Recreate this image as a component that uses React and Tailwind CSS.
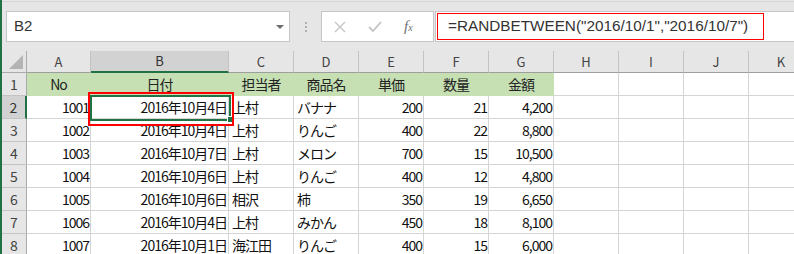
import React from "react";

const cols = [
  { key: "A", w: "w-[64px]" },
  { key: "B", w: "w-[138px]" },
  { key: "C", w: "w-[65px]" },
  { key: "D", w: "w-[65px]" },
  { key: "E", w: "w-[65px]" },
  { key: "F", w: "w-[65px]" },
  { key: "G", w: "w-[65px]" },
  { key: "H", w: "w-[65px]" },
  { key: "I", w: "w-[65px]" },
  { key: "J", w: "w-[65px]" },
  { key: "K", w: "w-[65px]" },
];

const head = ["No", "日付", "担当者", "商品名", "単価", "数量", "金額"];

const rows = [
  ["1001", "2016年10月4日", "上村", "バナナ", "200", "21", "4,200"],
  ["1002", "2016年10月4日", "上村", "りんご", "400", "22", "8,800"],
  ["1003", "2016年10月7日", "上村", "メロン", "700", "15", "10,500"],
  ["1004", "2016年10月6日", "上村", "りんご", "400", "12", "4,800"],
  ["1005", "2016年10月6日", "相沢", "柿", "350", "19", "6,650"],
  ["1006", "2016年10月4日", "上村", "みかん", "450", "18", "8,100"],
  ["1007", "2016年10月1日", "海江田", "りんご", "400", "15", "6,000"],
];

// which columns hold text (left aligned)
const textCols = [2, 3];

const jp = "font-['Noto_Sans_CJK_JP',sans-serif]";

function ColHeader() {
  return (
    <div className="flex h-[22px]">
      <div className="w-[25px] shrink-0 bg-[#e6e6e6] border-r border-b border-[#ababab] relative">
        <div className="absolute right-[3px] bottom-[3px] w-0 h-0 border-l-[14px] border-l-transparent border-b-[14px] border-b-[#b4b4b4]" />
      </div>
      {cols.map((c) =>
        c.key === "B" ? (
          <div key={c.key} className={`${c.w} shrink-0 bg-[#d2d2d2] border-r border-[#c3c3c3] border-b-2 border-b-[#217346] flex items-center justify-center text-[13px] text-[#333] ${jp}`}>
            {c.key}
          </div>
        ) : (
          <div key={c.key} className={`${c.w} shrink-0 bg-[#e6e6e6] border-r border-[#c3c3c3] border-b border-b-[#9e9e9e] flex items-center justify-center text-[13px] text-[#444] ${jp}`}>
            {c.key}
          </div>
        )
      )}
    </div>
  );
}

function RowHead({ n }) {
  const sel = n === 2;
  return (
    <div
      className={`w-[25px] shrink-0 flex items-center justify-center text-[14px] ${jp} ${
        sel
          ? "bg-[#d2d2d2] border-r-2 border-r-[#217346] border-b border-b-[#c3c3c3] text-[#333]"
          : "bg-[#e6e6e6] border-r border-r-[#ababab] border-b border-b-[#c3c3c3] text-[#444]"
      }`}
    >
      {n}
    </div>
  );
}

function Cell({ w, children, align, fill }) {
  return (
    <div
      className={`${w} shrink-0 h-full flex items-center overflow-hidden whitespace-nowrap border-r border-b ${
        fill ? "bg-[#c6e0b4] border-[#c6e0b4]" : "bg-white border-[#d4d4d4]"
      } ${align === "right" ? "justify-end pr-[1px]" : align === "center" ? "justify-center" : "justify-start pl-[3px]"}`}
    >
      {children}
    </div>
  );
}

export default function App() {
  return (
    <div className="w-[794px] h-[254px] overflow-hidden bg-white border-l-2 border-[#217346] relative">
      {/* formula bar */}
      <div className="h-[51px] bg-[#e6e6e6] pt-px">
        <div className="h-[50px] border-t border-[#d6d6d6] flex items-start pt-[9px] pl-[4px]">
          <div className="w-[284px] h-[31px] bg-white border border-[#c6c6c6] flex items-center justify-between pl-[7px] pr-[5px]">
            <span className="font-['Liberation_Sans',sans-serif] text-[15px] text-[#333]">B2</span>
            <div className="w-0 h-0 border-l-[4px] border-r-[4px] border-t-[4px] border-l-transparent border-r-transparent border-t-[#6d6d6d]" />
          </div>
          <div className="w-[31px] h-[31px] flex flex-col items-center justify-center gap-[2px]">
            <span className="w-[2px] h-[2px] bg-[#b0b0b0]" />
            <span className="w-[2px] h-[2px] bg-[#b0b0b0]" />
            <span className="w-[2px] h-[2px] bg-[#b0b0b0]" />
          </div>
          <div className="w-[113px] h-[31px] bg-white border border-[#c6c6c6] flex items-center">
            <svg width="12" height="12" viewBox="0 0 12 12" className="ml-[12px]">
              <path d="M1 1L11 11M11 1L1 11" stroke="#c4c4c4" strokeWidth="1.4" fill="none" />
            </svg>
            <svg width="14" height="11" viewBox="0 0 14 11" className="ml-[22px]">
              <path d="M1 6L5 10L13 1" stroke="#c4c4c4" strokeWidth="1.8" fill="none" />
            </svg>
            <span className="ml-[22px] font-['Liberation_Serif',serif] italic text-[15px] text-[#6f6f6f] leading-none">
              f<span className="text-[10px]">x</span>
            </span>
          </div>
          <div className="ml-px flex-1 h-[31px] bg-white border border-[#c6c6c6] border-r-0 relative flex items-center pl-[12px]">
            <span className="font-['Liberation_Sans',sans-serif] text-[15.3px] text-[#333] whitespace-nowrap">
              =RANDBETWEEN("2016/10/1","2016/10/7")
            </span>
            <div className="absolute left-[1px] top-[1px] w-[327px] h-[27px] border border-[#ff0000]" />
          </div>
        </div>
      </div>

      {/* grid */}
      <ColHeader />
      <div className="flex h-[23px]">
        <RowHead n={1} />
        {cols.map((c, i) => (
          <Cell key={c.key} w={c.w} align="center" fill={i < 7}>
            {i < 7 && <span className={`text-[14px] tracking-[-1px] text-[#222] ${jp}`}>{head[i]}</span>}
          </Cell>
        ))}
      </div>
      {rows.map((r, ri) => (
        <div key={ri} className="flex h-[23px]">
          <RowHead n={ri + 2} />
          {cols.map((c, i) => (
            <Cell key={c.key} w={c.w} align={textCols.includes(i) ? "left" : "right"}>
              {r[i] && <span className={`text-[14px] tracking-[-1px] text-[#111] ${jp}`}>{r[i]}</span>}
            </Cell>
          ))}
        </div>
      ))}

      {/* active cell B2 */}
      <div className="absolute left-[88px] top-[95px] w-[141px] h-[26px] border-2 border-[#217346] pointer-events-none" />
      <div className="absolute left-[225px] top-[116px] w-[7px] h-[7px] bg-[#217346] border border-white" />
      <div className="absolute left-[86px] top-[92px] w-[146px] h-[34px] border-2 border-[#ff0000] pointer-events-none" />
    </div>
  );
}
